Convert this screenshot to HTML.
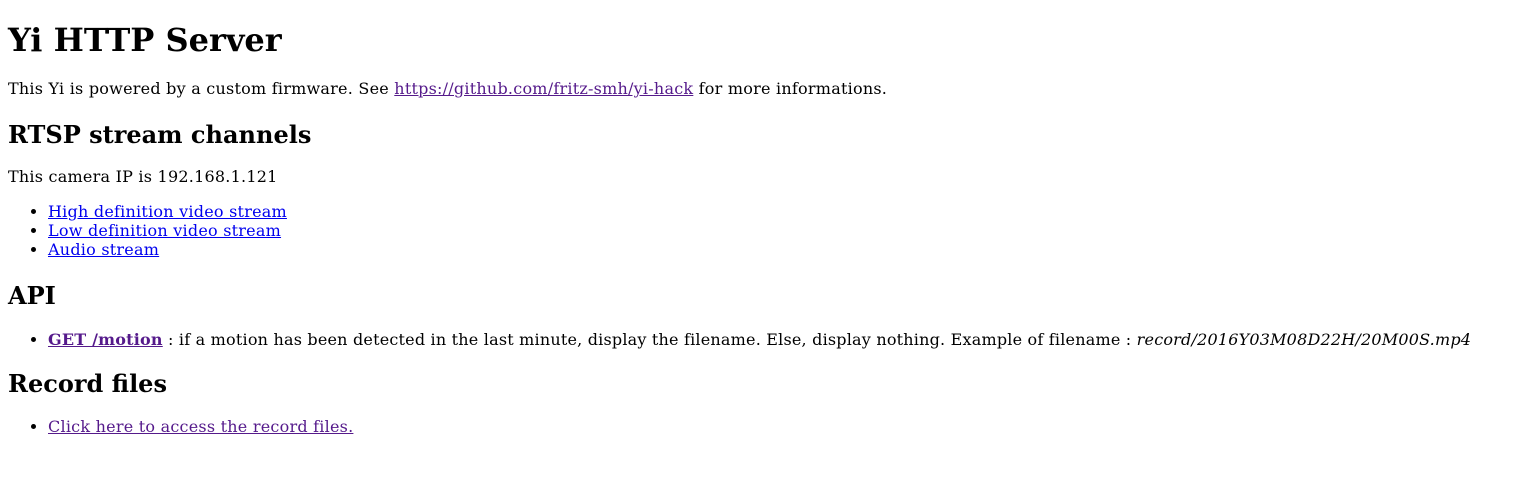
<!DOCTYPE html>
<html><head><meta charset="utf-8"><style>
body{margin:8px;font-family:"DejaVu Serif",serif;font-size:16px;background:#fff;color:#000}
p,ul{letter-spacing:0.23px}
ul.api{letter-spacing:0.2px}
h1,h2{letter-spacing:0}
.up{position:relative;top:-2px}
.dn{position:relative;top:1px}
a{color:#0000ee}
a.v{color:#551a8b}
</style></head><body>
<h1>Yi HTTP Server</h1>
<p class="up">This Yi is powered by a custom firmware. See <a class="v" href="#">https://github.com/fritz-smh/yi-hack</a> for more informations.</p>
<h2>RTSP stream channels</h2>
<p class="up">This camera IP is 192.168.1.121</p>
<ul class="up">
<li><a href="#">High definition video stream</a></li>
<li><a href="#">Low definition video stream</a></li>
<li><a href="#">Audio stream</a></li>
</ul>
<h2>API</h2>
<ul class="api">
<li><a class="v" href="#"><b>GET /motion</b></a> : if a motion has been detected in the last minute, display the filename. Else, display nothing. Example of filename : <i>record/2016Y03M08D22H/20M00S.mp4</i></li>
</ul>
<h2 class="dn">Record files</h2>
<ul>
<li><a class="v" href="#">Click here to access the record files.</a></li>
</ul>
</body></html>
